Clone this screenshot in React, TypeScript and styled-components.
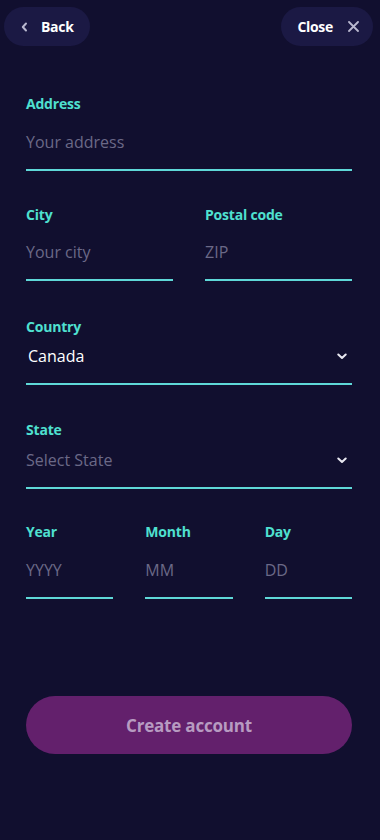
import React from "react";
import styled, { createGlobalStyle } from "styled-components";

const Global = createGlobalStyle`
  html, body { margin: 0; padding: 0; background: #110f2f; }
  body { font-family: "Open Sans", "Noto Sans", sans-serif; }
  * { box-sizing: border-box; }
`;

const Page = styled.div`
  width: 380px;
  min-height: 840px;
  background: #110f2f;
  display: flex;
  flex-direction: column;
`;

const TopBar = styled.div`
  display: flex;
  justify-content: space-between;
  align-items: center;
  padding: 7px 7px 0 4px;
`;

const PillButton = styled.button<{ $side: "left" | "right" }>`
  height: 39px;
  border: none;
  border-radius: 20px;
  background: #1b1944;
  color: #ffffff;
  font-family: "Open Sans", "Noto Sans", sans-serif;
  font-weight: 700;
  font-size: 14px;
  letter-spacing: -0.3px;
  display: flex;
  align-items: center;
  gap: ${(p) => (p.$side === "left" ? "13px" : "15px")};
  padding-left: ${(p) => (p.$side === "left" ? "17px" : "16px")};
  padding-right: ${(p) => (p.$side === "left" ? "16px" : "14px")};
`;

const Form = styled.div`
  display: flex;
  flex-direction: column;
  padding: 47px 28px 0 26px;
`;

const Row = styled.div<{ $cols: number; $mt: number }>`
  display: grid;
  grid-template-columns: repeat(${(p) => p.$cols}, 1fr);
  column-gap: 32px;
  margin-top: ${(p) => p.$mt}px;
`;

const Field = styled.div`
  display: flex;
  flex-direction: column;
`;

const Label = styled.label`
  font-family: "Open Sans", "Noto Sans", sans-serif;
  font-weight: 700;
  font-size: 14px;
  line-height: 22px;
  color: #4fe0d0;
  letter-spacing: -0.2px;
`;

const Control = styled.div<{ $h: number }>`
  height: ${(p) => p.$h}px;
  display: flex;
  align-items: flex-end;
  justify-content: space-between;
  border-bottom: 2px solid #5fd8d8;
  padding: 0 5px 17px 0;
`;

const Value = styled.span<{ $filled?: boolean }>`
  font-family: "Open Sans", "Noto Sans", sans-serif;
  font-size: 16px;
  line-height: 20px;
  color: ${(p) => (p.$filled ? "#ffffff" : "#6b6987")};
  padding-left: ${(p) => (p.$filled ? "2px" : "0")};
`;

const IconSlot = styled.span`
  height: 20px;
  display: flex;
  align-items: center;
`;

const SubmitButton = styled.button`
  margin: 97px 28px 0 26px;
  height: 58px;
  border: none;
  border-radius: 29px;
  background: #63206c;
  color: #b79bc1;
  font-family: "Open Sans", "Noto Sans", sans-serif;
  font-weight: 700;
  font-size: 17px;
  letter-spacing: -0.2px;
`;

const BackIcon = () => (
  <svg width="7" height="10" viewBox="0 0 7 10" fill="none">
    <path d="M5 1.5 L1.8 5 L5 8.5" stroke="#b9b8cf" strokeWidth="2" strokeLinecap="round" strokeLinejoin="round" />
  </svg>
);

const DownIcon = () => (
  <svg width="10" height="7" viewBox="0 0 10 7" fill="none">
    <path d="M1.3 1.5 L5 5 L8.7 1.5" stroke="#e8e8f0" strokeWidth="2" strokeLinecap="round" strokeLinejoin="round" />
  </svg>
);

const CloseIcon = () => (
  <svg width="11" height="11" viewBox="0 0 11 11" fill="none">
    <path d="M1 1 L10 10 M10 1 L1 10" stroke="#b9b8cf" strokeWidth="1.8" strokeLinecap="round" />
  </svg>
);

type F = { label: string; value: string; filled?: boolean; select?: boolean; h: number };

const FormField = ({ label, value, filled, select, h }: F) => (
  <Field>
    <Label>{label}</Label>
    <Control $h={h}>
      <Value $filled={filled}>{value}</Value>
      {select && (
        <IconSlot>
          <DownIcon />
        </IconSlot>
      )}
    </Control>
  </Field>
);

export default function App() {
  return (
    <Page>
      <Global />
      <TopBar>
        <PillButton $side="left">
          <BackIcon />
          Back
        </PillButton>
        <PillButton $side="right">
          Close
          <CloseIcon />
        </PillButton>
      </TopBar>
      <Form>
        <Row $cols={1} $mt={0}>
          <FormField label="Address" value="Your address" h={56} />
        </Row>
        <Row $cols={2} $mt={33}>
          <FormField label="City" value="Your city" h={55} />
          <FormField label="Postal code" value="ZIP" h={55} />
        </Row>
        <Row $cols={1} $mt={35}>
          <FormField label="Country" value="Canada" filled select h={47} />
        </Row>
        <Row $cols={1} $mt={34}>
          <FormField label="State" value="Select State" select h={48} />
        </Row>
        <Row $cols={3} $mt={32}>
          <FormField label="Year" value="YYYY" h={56} />
          <FormField label="Month" value="MM" h={56} />
          <FormField label="Day" value="DD" h={56} />
        </Row>
      </Form>
      <SubmitButton>Create account</SubmitButton>
    </Page>
  );
}
